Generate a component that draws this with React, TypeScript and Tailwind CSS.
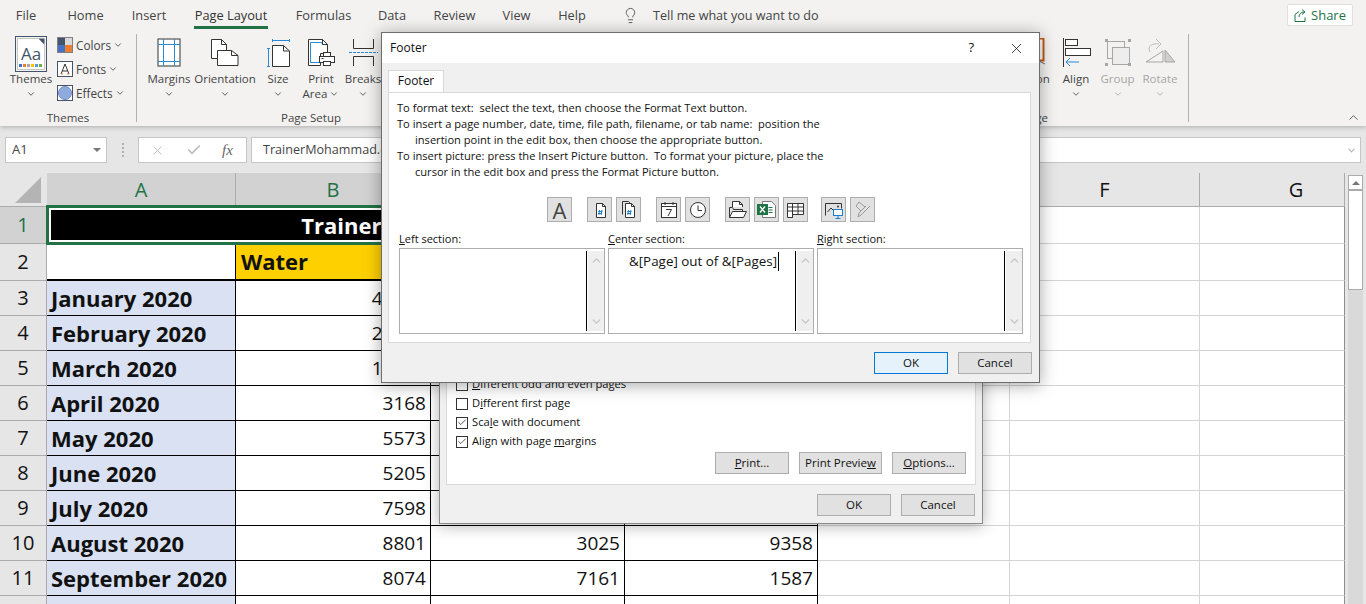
import type React from "react"
import { ChevronDown, ChevronUp, X, Check, Lightbulb } from "lucide-react"

const ui = "font-['Open_Sans','Noto_Sans',sans-serif]"

const rows = [
  { n: 3, month: "January 2020", vals: ["48250", "", ""] },
  { n: 4, month: "February 2020", vals: ["24170", "", ""] },
  { n: 5, month: "March 2020", vals: ["19360", "", ""] },
  { n: 6, month: "April 2020", vals: ["3168", "", ""] },
  { n: 7, month: "May 2020", vals: ["5573", "", ""] },
  { n: 8, month: "June 2020", vals: ["5205", "", ""] },
  { n: 9, month: "July 2020", vals: ["7598", "", ""] },
  { n: 10, month: "August 2020", vals: ["8801", "3025", "9358"] },
  { n: 11, month: "September 2020", vals: ["8074", "7161", "1587"] },
  { n: 12, month: "", vals: ["", "", ""] },
]

const tabs = [
  { label: "File", w: "w-[52px]" },
  { label: "Home", w: "w-[67px]" },
  { label: "Insert", w: "w-[60px]" },
  { label: "Page Layout", w: "w-[104px]", active: true },
  { label: "Formulas", w: "w-[81px]" },
  { label: "Data", w: "w-[56px]" },
  { label: "Review", w: "w-[69px]" },
  { label: "View", w: "w-[55px]" },
  { label: "Help", w: "w-[56px]" },
]

function Chev({ className = "" }: { className?: string }) {
  return <ChevronDown size={10} strokeWidth={2} className={className} />
}

function RibbonButton({
  w,
  lines,
  icon,
  arrowInline,
  noArrow,
  disabled,
}: {
  w: string
  lines: string[]
  icon: React.ReactNode
  arrowInline?: boolean
  noArrow?: boolean
  disabled?: boolean
}) {
  return (
    <div className={`${w} flex flex-col items-center shrink-0 ${disabled ? "text-[#a6a6a6]" : "text-[#444]"}`}>
      <div className="h-[32px] mt-[4px] flex items-start justify-center">{icon}</div>
      <div className="text-[11.500px] leading-[15px] whitespace-nowrap mt-[1px]">{lines[0]}</div>
      {arrowInline ? (
        <div className="text-[11.500px] leading-[15px] whitespace-nowrap flex items-center gap-[2px]">
          {lines[1]}
          {!noArrow && <Chev />}
        </div>
      ) : (
        <div className="h-[15px] flex items-center">
          <Chev />
        </div>
      )}
    </div>
  )
}

function MarginsIcon() {
  return (
    <svg width="24" height="29" viewBox="0 0 24 29" fill="none">
      <rect x="1" y="1" width="22" height="27" fill="#fff" stroke="#333" />
      <path d="M6.500 1v27M17.500 1v27M1 6.500h22M1 23.500h22" stroke="#2b8ad6" />
    </svg>
  )
}

function OrientationIcon() {
  return (
    <svg width="30" height="29" viewBox="0 0 30 29" fill="none">
      <path d="M1.500 1.500h10l5 5v6H9v8H1.500z" fill="#fff" stroke="#333" />
      <path d="M11.500 1.500v5h5" stroke="#333" />
      <path d="M7.500 12.500h14l6.500 5v10h-20.500z" fill="#fff" stroke="#333" />
      <path d="M21.500 12.500v5h6.500" stroke="#333" />
    </svg>
  )
}

function SizeIcon() {
  return (
    <svg width="24" height="30" viewBox="0 0 24 30" fill="none">
      <path d="M1 10.500h3M2.500 10.500v18M1 28.500h3M6.500 1v3M6.500 2.500h17M23.500 1v3" stroke="#2b8ad6" />
      <path d="M6.500 7.500h11l6 5.500v15.500h-17z" fill="#fff" stroke="#333" />
      <path d="M17.500 7.500v5.500h6" stroke="#333" />
    </svg>
  )
}

function PrintAreaIcon() {
  return (
    <svg width="28" height="30" viewBox="0 0 28 30" fill="none">
      <path d="M1.500 1.500h14l5 5v9h-7v12H1.500z" fill="#fff" stroke="#333" />
      <path d="M15.500 1.500v5h5" stroke="#333" />
      <path d="M3.500 4.500h11v1M3.500 4.500v20h9" stroke="#2b8ad6" />
      <rect x="16.500" y="14.500" width="7" height="5" fill="#fff" stroke="#333" />
      <rect x="12.500" y="18.500" width="15" height="6" fill="#fff" stroke="#333" />
      <rect x="16.500" y="23.500" width="7" height="4" fill="#fff" stroke="#333" />
      <path d="M14.500 20.500h2" stroke="#333" />
    </svg>
  )
}

function BreaksIcon() {
  return (
    <svg width="30" height="29" viewBox="0 0 30 29" fill="none">
      <path d="M5.500 1v9.500h20V1M5.500 28V18.500h20V28" stroke="#333" />
      <path d="M1 14.500h29" stroke="#2b8ad6" strokeDasharray="3 1" />
    </svg>
  )
}

function ThemesIcon() {
  return (
    <svg width="32" height="36" viewBox="0 0 32 36" fill="none" className="shrink-0">
      <rect x="0.500" y="0.500" width="31" height="35" fill="#f3f2f1" stroke="#44546a" />
      <path d="M2.500 2.500h21l6 6v25h-27z" fill="#fff" stroke="#c6c6c6" />
      <path d="M23.500 2.500h6v6z" fill="#44546a" />
      <text x="6" y="24" fontSize="17" fontFamily="'Open Sans',sans-serif" fill="#44546a">
        Aa
      </text>
      <rect x="4" y="28" width="3" height="3" fill="#4472c4" />
      <rect x="8" y="28" width="3" height="3" fill="#ed7d31" />
      <rect x="12" y="28" width="3" height="3" fill="#a5a5a5" />
      <rect x="16" y="28" width="3" height="3" fill="#ffc000" />
      <rect x="20" y="28" width="3" height="3" fill="#5b9bd5" />
      <rect x="24" y="28" width="3" height="3" fill="#70ad47" />
    </svg>
  )
}

function ColorsIcon() {
  return (
    <svg width="16" height="16" viewBox="0 0 16 16" className="shrink-0">
      <rect width="8" height="8" fill="#44546a" />
      <rect x="8" width="8" height="8" fill="#d9d9d9" />
      <rect y="8" width="8" height="8" fill="#4472c4" />
      <rect x="8" y="8" width="8" height="8" fill="#ed7d31" />
      <rect x="0.500" y="0.500" width="15" height="15" fill="none" stroke="#7f7f7f" />
    </svg>
  )
}

function FontsIcon() {
  return (
    <svg width="16" height="16" viewBox="0 0 16 16" className="shrink-0">
      <rect x="0.500" y="0.500" width="15" height="15" fill="#fff" stroke="#44546a" />
      <path d="M4 13L8 3l4 10M5.300 10h5.400" fill="none" stroke="#333" />
      <path d="M4 13h2M10 13h2" stroke="#ed7d31" />
    </svg>
  )
}

function EffectsIcon() {
  return (
    <svg width="16" height="16" viewBox="0 0 16 16" className="shrink-0">
      <rect x="0.500" y="0.500" width="15" height="15" fill="#fff" stroke="#44546a" />
      <circle cx="8" cy="8" r="6.500" fill="#8faadc" stroke="#6f8cc6" />
    </svg>
  )
}

function SelectionIcon() {
  return (
    <svg width="38" height="29" viewBox="0 0 38 29" fill="none">
      <rect x="2.500" y="0.500" width="34" height="22" fill="#fff" stroke="#c55a11" strokeWidth="2" />
      <path d="M26 26l6-3 6 3" stroke="#666" />
    </svg>
  )
}

function AlignIcon() {
  return (
    <svg width="29" height="29" viewBox="0 0 29 29" fill="none">
      <path d="M1.500 0v29" stroke="#333" />
      <rect x="3.500" y="1.500" width="12" height="6" fill="#fff" stroke="#333" />
      <rect x="3.500" y="10.500" width="25" height="7" fill="#fff" stroke="#333" />
      <path d="M4 24h13M8 20l-4 4 4 4" stroke="#2b8ad6" />
    </svg>
  )
}

function GroupIcon() {
  return (
    <svg width="28" height="29" viewBox="0 0 28 29" fill="none">
      <rect x="3.500" y="3.500" width="17" height="17" stroke="#a6a6a6" />
      <rect x="8.500" y="9.500" width="17" height="17" fill="#ededed" stroke="#a6a6a6" />
      <g fill="#a6a6a6">
        <rect x="1" y="1" width="3" height="3" />
        <rect x="24" y="1" width="3" height="3" />
        <rect x="1" y="25" width="3" height="3" />
        <rect x="24" y="25" width="3" height="3" />
      </g>
    </svg>
  )
}

function RotateIcon() {
  return (
    <svg width="31" height="29" viewBox="0 0 31 29" fill="none">
      <path d="M1 24L18 13v11z" fill="#f3f2f1" stroke="#a6a6a6" />
      <path d="M20 12v12h10z" fill="#cfcfcf" stroke="#a6a6a6" />
      <path d="M5 14c-3-6 2-9 9-8M11 1l5 5-5 5" stroke="#bdbdbd" />
    </svg>
  )
}

function ToolBtn({ children }: { children: React.ReactNode }) {
  return (
    <div className="w-[25px] h-[25px] bg-[#e1e1e1] border border-[#adadad] flex items-center justify-center shrink-0">
      {children}
    </div>
  )
}

function PageGlyph({ double }: { double?: boolean }) {
  return (
    <svg width="18" height="19" viewBox="0 0 18 19" fill="none">
      {double && <path d="M2.500 14.500v-13h6l2 2" stroke="#333" />}
      <path d="M5.500 3.500h6l3 3v11h-9z" fill="#fff" stroke="#333" />
      <path d="M11.500 3.500v3h3" stroke="#333" />
      <path d="M8.500 10l-.6 5M10.800 10l-.6 5M7.300 11.500h4.200M7 13.500h4.200" stroke="#1f7fc9" />
    </svg>
  )
}

function CalendarGlyph() {
  return (
    <svg width="18" height="18" viewBox="0 0 18 18" fill="none">
      <rect x="1.500" y="2.500" width="15" height="14" fill="#fff" stroke="#333" />
      <path d="M1.500 5.500h15M5 1v3M13 1v3M6 8.500h5.500L8 15" stroke="#333" />
    </svg>
  )
}

function ClockGlyph() {
  return (
    <svg width="18" height="18" viewBox="0 0 18 18" fill="none">
      <circle cx="9" cy="9" r="7.500" fill="#fff" stroke="#333" />
      <path d="M9 4.500v5h4" stroke="#333" />
    </svg>
  )
}

function FolderGlyph() {
  return (
    <svg width="20" height="19" viewBox="0 0 20 19" fill="none">
      <path d="M4.500 7V1.500h7l3 3V7" fill="#fff" stroke="#333" />
      <path d="M11.500 1.500v3h3" stroke="#333" />
      <path d="M1.500 17.500V7.500h3l1 2h9v2" stroke="#333" />
      <path d="M1.500 17.500l3-6h14l-3 6z" fill="#fff" stroke="#333" />
    </svg>
  )
}

function ExcelGlyph() {
  return (
    <svg width="21" height="19" viewBox="0 0 21 19" fill="none">
      <path d="M6.500 1.500h9l4 4v12h-13z" fill="#fff" stroke="#777" />
      <path d="M12.500 7.500h4M12.500 10h4M12.500 12.500h4" stroke="#217346" />
      <rect x="1" y="4" width="11" height="11" fill="#217346" />
      <path d="M4 6.500l5 6M9 6.500l-5 6" stroke="#fff" strokeWidth="1.300" />
    </svg>
  )
}

function SheetGlyph() {
  return (
    <svg width="19" height="18" viewBox="0 0 19 18" fill="none">
      <path d="M1.500 2.500h16v11h-11v3h-5z" fill="#fff" stroke="#333" />
      <path d="M1.500 6h16M1.500 10h16M6.500 2.500v14M12 2.500v11" stroke="#333" />
    </svg>
  )
}

function PictureGlyph() {
  return (
    <svg width="20" height="19" viewBox="0 0 20 19" fill="none">
      <path d="M1.500 15.500v-12h16v5" stroke="#333" />
      <path d="M3.500 12l3.500-4 3 3" stroke="#333" />
      <circle cx="14" cy="6.500" r="1" fill="#333" />
      <rect x="9.500" y="9.500" width="9" height="6" fill="#fff" stroke="#1f7fc9" />
      <path d="M14 16v2M11.500 18.500h5" stroke="#1f7fc9" />
    </svg>
  )
}

function FormatPicGlyph() {
  return (
    <svg width="19" height="19" viewBox="0 0 19 19" fill="none">
      <path d="M6 2l6 5-4 4-5-5z" fill="#e1e1e1" stroke="#9a9a9a" />
      <path d="M17 6l-9 9-3 2 1-4 7-7" stroke="#9a9a9a" />
    </svg>
  )
}

function Scroll() {
  return (
    <div className="w-[16px] ml-[1px] shrink-0 bg-[#efefef] flex flex-col justify-between items-center py-[3px]">
      <ChevronUp size={13} strokeWidth={2.500} className="text-[#c4c4c4]" />
      <ChevronDown size={13} strokeWidth={2.500} className="text-[#c4c4c4]" />
    </div>
  )
}

function EditBox({ children }: { children?: React.ReactNode }) {
  return (
    <div className="w-[206px] h-[86px] bg-white border border-[#adadad] flex py-[2px] shrink-0">
      <div className="flex-1 border-r border-black flex justify-center pl-[4px] pt-[1px] text-[13.400px] leading-[18px] text-[#111] whitespace-nowrap">
        {children}
      </div>
      <Scroll />
    </div>
  )
}

function DlgButton({ w, primary, children }: { w: string; primary?: boolean; children: React.ReactNode }) {
  return (
    <div
      className={`${w} h-[22px] flex items-center justify-center text-[11.500px] text-[#111] shrink-0 ${
        primary ? "bg-[#e5f1fb] border border-[#0078d7]" : "bg-[#e1e1e1] border border-[#adadad]"
      }`}
    >
      {children}
    </div>
  )
}

function CheckRow({ checked, children }: { checked?: boolean; children: React.ReactNode }) {
  return (
    <div className="h-[19px] flex items-center gap-[4px] text-[11.200px] text-[#111] whitespace-nowrap">
      <div className="w-[12px] h-[12px] bg-white border border-[#333] flex items-center justify-center">
        {checked && <Check size={11} strokeWidth={2} className="text-[#333]" />}
      </div>
      {children}
    </div>
  )
}

export default function App() {
  const hdr = "flex items-center justify-center text-[20px] border-r border-b"
  const blank = "bg-white border-r border-b border-[#d4d4d4]"
  const blankLast = "bg-white border-r border-b border-b-[#d4d4d4] border-r-[#8f8f8f]"
  return (
    <div className={`${ui} relative w-[1366px] h-[604px] overflow-hidden bg-[#e6e6e6]`}>
      {/* ribbon */}
      <div className="relative z-10 h-[126px] bg-[#f3f2f1] shadow-[0_1px_5px_rgba(0,0,0,0.25)] flex flex-col">
        <div className="h-[32px] flex items-start text-[#444] text-[12.800px] shrink-0">
          {tabs.map((t) => (
            <div key={t.label} className={`${t.w} h-[32px] flex justify-center pt-[6px] leading-[18px]`}>
              <span
                className={
                  t.active ? "h-[23px] px-[1px] border-b-[3px] border-[#217346] text-[#333] font-medium" : ""
                }
              >
                {t.label}
              </span>
            </div>
          ))}
          <Lightbulb size={17} strokeWidth={1.300} className="ml-[22px] mt-[7px] text-[#555]" />
          <span className="ml-[14px] pt-[7px] leading-[18px] text-[12.600px] whitespace-nowrap">
            Tell me what you want to do
          </span>
          <div className="ml-auto mr-[13px] mt-[4px] pt-[1px] w-[66px] h-[22px] bg-white border border-[#e1dfdd] rounded-[2px] flex items-center justify-center gap-[4px] text-[#217346] text-[13px]">
            <svg width="13" height="13" viewBox="0 0 13 13" fill="none" stroke="#217346">
              <path d="M1 5.500v7h10v-4M1 5.500l4-3M5 8c0-3 2-5 5-5M8 .500l3 2.500-3 2.500" />
            </svg>
            Share
          </div>
        </div>

        <div className="flex-1 flex items-start relative">
          {/* themes */}
          <div className="w-[137px] h-[88px] mt-[2px] border-r border-[#b3b0ad] flex flex-col shrink-0">
            <div className="flex pl-[6px] h-[70px] shrink-0">
              <div className="w-[50px] flex flex-col items-center text-[#444] mt-[2px]">
                <ThemesIcon />
                <div className="text-[11.500px] leading-[15px] -mt-[1px]">Themes</div>
                <div className="h-[15px] flex items-center">
                  <Chev />
                </div>
              </div>
              <div className="ml-[1px] flex flex-col gap-[8px] mt-[3px] text-[#444] text-[11.800px] leading-[16px]">
                <div className="flex items-center gap-[3px]">
                  <ColorsIcon />
                  Colors
                  <Chev className="-ml-[1px]" />
                </div>
                <div className="flex items-center gap-[3px]">
                  <FontsIcon />
                  Fonts
                  <Chev className="-ml-[1px]" />
                </div>
                <div className="flex items-center gap-[3px]">
                  <EffectsIcon />
                  Effects
                  <Chev className="-ml-[1px]" />
                </div>
              </div>
            </div>
            <div className="text-[11.500px] leading-[14px] text-[#444] text-center mt-[7px]">Themes</div>
          </div>

          {/* page setup */}
          <div className="w-[348px] h-[88px] mt-[2px] flex flex-col shrink-0">
            <div className="flex pl-[5px] h-[70px] shrink-0">
              <RibbonButton w="w-[54px]" lines={["Margins"]} icon={<MarginsIcon />} />
              <RibbonButton w="w-[58px]" lines={["Orientation"]} icon={<OrientationIcon />} />
              <RibbonButton w="w-[48px]" lines={["Size"]} icon={<SizeIcon />} />
              <RibbonButton w="w-[38px]" lines={["Print", "Area"]} arrowInline icon={<PrintAreaIcon />} />
              <RibbonButton w="w-[46px]" lines={["Breaks"]} icon={<BreaksIcon />} />
            </div>
            <div className="text-[11.500px] leading-[14px] text-[#444] text-center mt-[7px]">Page Setup</div>
          </div>

          <div className="w-[380px] shrink-0" />

          {/* arrange */}
          <div className="w-[324px] h-[88px] mt-[2px] border-r border-[#b3b0ad] flex flex-col shrink-0">
            <div className="flex justify-end pr-[4px] h-[70px] shrink-0">
              <RibbonButton w="w-[55px]" lines={["Selection", "Pane"]} arrowInline noArrow icon={<SelectionIcon />} />
              <RibbonButton w="w-[46px]" lines={["Align"]} icon={<AlignIcon />} />
              <RibbonButton w="w-[37px]" lines={["Group"]} icon={<GroupIcon />} disabled />
              <RibbonButton w="w-[48px]" lines={["Rotate"]} icon={<RotateIcon />} disabled />
            </div>
            <div className="text-[11.500px] leading-[14px] text-[#444] text-center mt-[7px]">Arrange</div>
          </div>

          <div className="flex-1 h-full flex justify-end items-end pr-[5px] pb-[1px] text-[#444]">
            <ChevronUp size={15} strokeWidth={1.300} />
          </div>
        </div>
      </div>

      {/* formula bar */}
      <div className="h-[47px] flex items-center pl-[5px] pr-[5px] pt-[1px]">
        <div className="w-[102px] h-[26px] bg-white border border-[#c6c6c6] flex items-center pl-[6px] pr-[5px] text-[13px] text-[#444]">
          A1
          <span className="ml-auto w-0 h-0 border-x-[4px] border-x-transparent border-t-[4px] border-t-[#777]" />
        </div>
        <div className="w-[31px] flex flex-col items-center gap-[2px]">
          <span className="w-[2px] h-[2px] bg-[#b0b0b0]" />
          <span className="w-[2px] h-[2px] bg-[#b0b0b0]" />
          <span className="w-[2px] h-[2px] bg-[#b0b0b0]" />
          <span className="w-[2px] h-[2px] bg-[#b0b0b0]" />
        </div>
        <div className="w-[109px] h-[26px] bg-white border border-[#c6c6c6] flex items-center pl-[11px] text-[#bdbdbd]">
          <X size={15} strokeWidth={1.500} />
          <Check size={16} strokeWidth={2.500} className="ml-[21px]" />
          <span className="ml-[20px] text-[#666] italic text-[15px] font-['Liberation_Serif',serif]">fx</span>
        </div>
        <div className="ml-[4px] flex-1 h-[26px] bg-white border border-[#c6c6c6] flex items-center pl-[11px] pr-[3px] text-[12.600px] text-[#444]">
          TrainerMohammad.com
          <ChevronDown size={11} strokeWidth={2.500} className="ml-auto text-[#b5b5b5]" />
        </div>
      </div>

      {/* sheet */}
      <div className="flex">
        <div className="w-[1345px] grid grid-cols-[47px_189px_195px_194px_193px_192px_190px_145px] grid-rows-[34px_37px_37px_repeat(10,35px)] text-[#111] shrink-0">
          <div className="bg-[#e6e6e6] border-b border-[#ababab] flex items-center justify-center">
            <div className="w-0 h-0 ml-[8px] border-l-[26px] border-l-transparent border-b-[26px] border-b-[#b4b4b4]" />
          </div>
          {["A", "B", "C", "D"].map((c) => (
            <div key={c} className={`${hdr} bg-[#d2d2d2] text-[#217346] border-[#ababab]`}>
              {c}
            </div>
          ))}
          <div className={`${hdr} bg-[#e6e6e6] border-[#ababab]`}>E</div>
          <div className={`${hdr} bg-[#e6e6e6] border-[#ababab]`}>F</div>
          {/* column G runs on under the scrollbar, so its letter sits right of the visible middle */}
          <div className={`${hdr} bg-[#e6e6e6] border-[#ababab] pl-[48px]`}>G</div>

          <div className={`${hdr} bg-[#d2d2d2] text-[#217346] border-[#ababab]`}>1</div>
          <div className="relative z-[1] col-span-4 border-[3px] border-[#217346] bg-white p-[2px] -ml-[1px] -mt-[2px] -mb-[1px]">
            <div className="h-full bg-black text-white font-bold text-[22px] leading-[26px] flex items-center justify-center pl-[4px]">
              TrainerMohammad.com
            </div>
          </div>
          <div className={blank} />
          <div className={blank} />
          <div className={blankLast} />

          <div className={`${hdr} border-[#ababab]`}>2</div>
          <div className="bg-white border-b-2 border-r border-black" />
          <div className="bg-[#ffd000] border-b-2 border-r border-black flex items-center pl-[5px] font-bold text-[22px]">
            Water
          </div>
          <div className="bg-[#ffd000] border-b-2 border-r border-black" />
          <div className="bg-[#ffd000] border-b-2 border-r border-black" />
          <div className={blank} />
          <div className={blank} />
          <div className={blankLast} />

          {rows.map((r) => (
            <div key={r.n} className="contents">
              <div className={`${hdr} border-[#ababab]`}>{r.month ? r.n : ""}</div>
              <div className="bg-[#d9e1f2] border-b border-r border-black flex items-center pl-[4px] pt-[1px] font-bold text-[22px] whitespace-nowrap">
                {r.month}
              </div>
              {r.vals.map((v, i) => (
                <div
                  key={i}
                  className="bg-white border-b border-r border-black flex items-center justify-end pr-[4px] pt-[1px] text-[19px]"
                >
                  {v}
                </div>
              ))}
              <div className={blank} />
              <div className={blank} />
              <div className={blankLast} />
            </div>
          ))}
        </div>

        {/* scrollbar */}
        <div className="ml-[3px] w-[15px] pt-[2px] flex flex-col shrink-0">
          <div className="h-[15px] bg-white border border-[#ababab] flex items-center justify-center">
            <span className="w-0 h-0 border-x-[4px] border-x-transparent border-b-[4px] border-b-[#777]" />
          </div>
          <div className="h-[100px] bg-white border border-[#ababab]" />
          <div className="h-[320px] bg-[#d9d9d9]" />
        </div>
      </div>

      {/* page setup dialog, behind the footer one */}
      <div className="absolute z-20 left-[439px] top-[120px] w-[544px] h-[404px] bg-[#f0f0f0] border border-[#8a8a8a] shadow-[0_2px_14px_rgba(0,0,0,0.3)] flex flex-col px-[6px]">
        <div className="mt-[10px] h-[354px] bg-white border border-[#d9d9d9] flex flex-col justify-end pl-[9px] pr-[6px] pb-[10px] shrink-0">
          <CheckRow>
            <span>
              <u>D</u>ifferent odd and even pages
            </span>
          </CheckRow>
          <CheckRow>
            <span>
              D<u>i</u>fferent first page
            </span>
          </CheckRow>
          <CheckRow checked>
            <span>
              Sca<u>l</u>e with document
            </span>
          </CheckRow>
          <CheckRow checked>
            <span>
              Align with page <u>m</u>argins
            </span>
          </CheckRow>
          <div className="flex justify-end gap-[10px] mt-[1px] pr-[3px]">
            <DlgButton w="w-[74px]">
              <span>
                <u>P</u>rint...
              </span>
            </DlgButton>
            <DlgButton w="w-[83px]">
              <span>
                Print Previe<u>w</u>
              </span>
            </DlgButton>
            <DlgButton w="w-[74px]">
              <span>
                <u>O</u>ptions...
              </span>
            </DlgButton>
          </div>
        </div>
        <div className="flex justify-end gap-[10px] mt-[9px] pr-[1px]">
          <DlgButton w="w-[74px]">OK</DlgButton>
          <DlgButton w="w-[74px]">Cancel</DlgButton>
        </div>
      </div>

      {/* footer dialog */}
      <div className="absolute z-30 left-[381px] top-[32px] w-[659px] h-[351px] bg-[#f0f0f0] border border-[#6d6d6d] shadow-[0_2px_16px_rgba(0,0,0,0.35)] flex flex-col">
        <div className="h-[30px] bg-white flex items-center pl-[8px] text-[12px] text-[#111] shrink-0">
          Footer
          <span className="ml-auto mr-[34px] text-[13px]">?</span>
          <X size={17} strokeWidth={1.100} className="mr-[14px]" />
        </div>
        <div className="pl-[6px] pt-[7px] shrink-0">
          <div className="w-[56px] h-[22px] pb-[2px] bg-white border border-[#d9d9d9] border-b-0 flex items-center justify-center text-[12px] text-[#111]">
            Footer
          </div>
        </div>
        <div className="ml-[6px] w-[643px] h-[251px] bg-white border border-[#d9d9d9] shrink-0 flex flex-col pl-[8px]">
          <div className="pt-[7px] text-[11.100px] leading-[16px] text-[#111] whitespace-pre">
            <div>To format text:  select the text, then choose the Format Text button.</div>
            <div>To insert a page number, date, time, file path, filename, or tab name:  position the</div>
            <div className="pl-[18px]">insertion point in the edit box, then choose the appropriate button.</div>
            <div>To insert picture: press the Insert Picture button.  To format your picture, place the</div>
            <div className="pl-[18px]">cursor in the edit box and press the Format Picture button.</div>
          </div>
          <div className="mt-[17px] ml-[150px] flex items-center">
            <ToolBtn>
              <span className="text-[22px] leading-none text-[#444]">A</span>
            </ToolBtn>
            <div className="ml-[15px] flex gap-[4px]">
              <ToolBtn>
                <PageGlyph />
              </ToolBtn>
              <ToolBtn>
                <PageGlyph double />
              </ToolBtn>
            </div>
            <div className="ml-[15px] flex gap-[4px]">
              <ToolBtn>
                <CalendarGlyph />
              </ToolBtn>
              <ToolBtn>
                <ClockGlyph />
              </ToolBtn>
            </div>
            <div className="ml-[15px] flex gap-[4px]">
              <ToolBtn>
                <FolderGlyph />
              </ToolBtn>
              <ToolBtn>
                <ExcelGlyph />
              </ToolBtn>
              <ToolBtn>
                <SheetGlyph />
              </ToolBtn>
            </div>
            <div className="ml-[13px] flex gap-[4px]">
              <ToolBtn>
                <PictureGlyph />
              </ToolBtn>
              <ToolBtn>
                <FormatPicGlyph />
              </ToolBtn>
            </div>
          </div>
          <div className="mt-[9px] ml-[2px] flex text-[11px] leading-[16px] text-[#111]">
            <div className="w-[209px]">
              <u>L</u>eft section:
            </div>
            <div className="w-[209px]">
              <u>C</u>enter section:
            </div>
            <div>
              <u>R</u>ight section:
            </div>
          </div>
          <div className="ml-[2px] mt-[1px] flex gap-[3px]">
            <EditBox />
            <EditBox>
              <span className="border-r border-black pr-[1px] h-[19px]">&amp;[Page] out of &amp;[Pages]</span>
            </EditBox>
            <EditBox />
          </div>
        </div>
        <div className="flex justify-end gap-[10px] mt-[9px] pr-[7px]">
          <DlgButton w="w-[74px]" primary>
            OK
          </DlgButton>
          <DlgButton w="w-[74px]">Cancel</DlgButton>
        </div>
      </div>
    </div>
  )
}
